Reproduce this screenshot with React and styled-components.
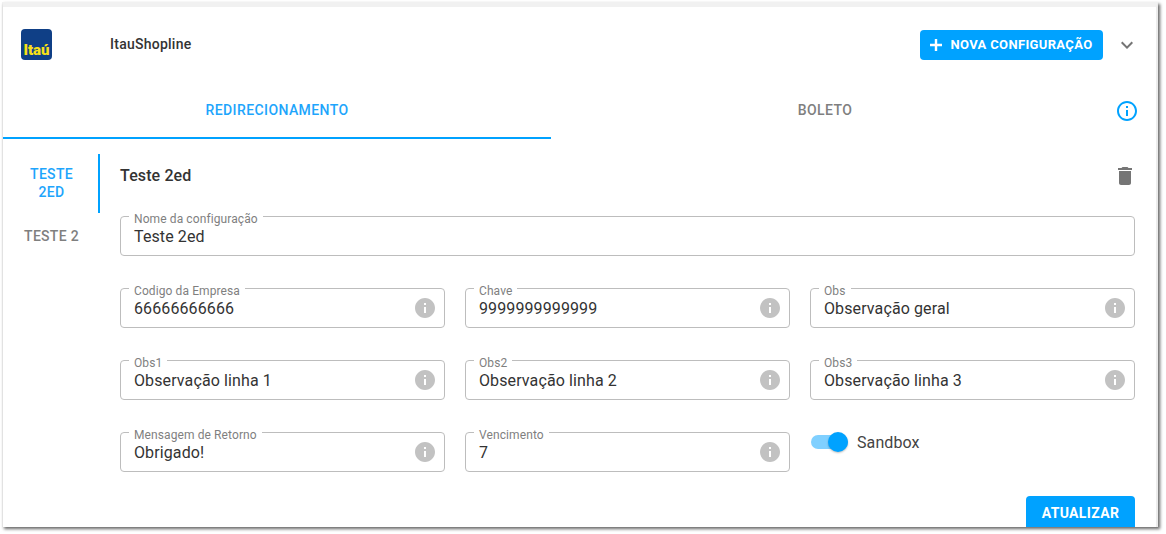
import React from "react";
import styled, { createGlobalStyle } from "styled-components";

const Global = createGlobalStyle`
  html, body { margin: 0; padding: 0; background: #fff; }
  html { height: 100%; overflow: hidden; }
  body { height: 100%; padding-top: 2px; box-sizing: border-box; font-family: Roboto, "Liberation Sans", sans-serif; }
`;

const Shot = styled.div`
  box-sizing: border-box;
  width: 1156px;
  height: 525px;
  margin-left: 2px;
  background: #fff;
  border-top: 5px solid #f1f1f1;
  border-left: 1px solid #e2e2e2;
  border-right: 2px solid #ececec;
  box-shadow: 2px 2px 3px rgba(0, 0, 0, 0.6);
  overflow: hidden;
`;

const Header = styled.header`
  display: flex;
  align-items: center;
  height: 75px;
  padding: 0 17px 0 18px;
`;

const Logo = styled.svg`
  width: 31px;
  height: 31px;
  flex: none;
`;

const LogoText = styled.text`
  font-family: Roboto, sans-serif;
  font-weight: 900;
  font-size: 15px;
  fill: #f7e017;
`;

const Title = styled.div`
  margin-left: 58px;
  padding-bottom: 2px;
  flex: 1;
  font-size: 14px;
  font-weight: 500;
  letter-spacing: 0.25px;
  color: #333;
`;

const PrimaryButton = styled.button`
  display: inline-flex;
  align-items: center;
  justify-content: center;
  gap: ${(p) => (p.$icon ? "7px" : "0")};
  height: ${(p) => p.$h || 30}px;
  width: ${(p) => p.$w}px;
  padding: 0 ${(p) => (p.$icon ? "3px" : "0")} 0 0;
  border: 0;
  border-radius: 4px;
  background: #00a2ff;
  color: #fff;
  font-family: inherit;
  font-size: ${(p) => p.$size || 13}px;
  font-weight: 700;
  letter-spacing: 0.35px;
  text-transform: uppercase;
  white-space: nowrap;
`;

const Chevron = styled.span`
  display: flex;
  margin-left: 12px;
  color: #757575;
`;

const TabRow = styled.div`
  display: flex;
  align-items: stretch;
  height: 57px;
`;

const Tab = styled.div`
  width: 548px;
  display: flex;
  align-items: center;
  justify-content: center;
  box-sizing: border-box;
  height: 57px;
  font-size: 14px;
  font-weight: 500;
  letter-spacing: 0.4px;
  text-transform: uppercase;
  color: ${(p) => (p.$active ? "#1ea5fc" : "#7f7f7f")};
  border-bottom: 2px solid ${(p) => (p.$active ? "#00a2ff" : "transparent")};
`;

const InfoSlot = styled.div`
  flex: 1;
  display: flex;
  align-items: center;
  justify-content: center;
  height: 57px;
  padding-right: 2px;
  color: #00a2ff;
`;

const Body = styled.div`
  display: flex;
  padding-top: 15px;
`;

const Side = styled.nav`
  width: 97px;
  flex: none;
`;

const SideTab = styled.div`
  box-sizing: border-box;
  height: ${(p) => (p.$active ? 59 : 45)}px;
  width: 97px;
  display: flex;
  align-items: center;
  justify-content: center;
  text-align: center;
  padding: 0 ${(p) => (p.$active ? 25 : 13)}px ${(p) => (p.$active ? 2 : 0)}px ${(p) => (p.$active ? 27 : 15)}px;
  font-size: 14px;
  line-height: 18px;
  font-weight: 500;
  letter-spacing: 0.3px;
  text-transform: uppercase;
  color: ${(p) => (p.$active ? "#1ea5fc" : "#7f7f7f")};
  border-right: 2px solid ${(p) => (p.$active ? "#00a2ff" : "transparent")};
`;

const Content = styled.main`
  width: 1015px;
  margin-left: 20px;
`;

const ConfigHead = styled.div`
  display: flex;
  align-items: center;
  justify-content: space-between;
  height: 42px;
  margin-bottom: 20px;
`;

const ConfigTitle = styled.h2`
  margin: 0;
  font-size: 16px;
  font-weight: 500;
  letter-spacing: 0.12px;
  color: #333;
`;

const Trash = styled.svg`
  width: 24px;
  height: 24px;
  margin-right: -2px;
  margin-top: 2px;
  fill: #757575;
`;

const Grid = styled.div`
  display: grid;
  grid-template-columns: repeat(3, 325px);
  column-gap: 20px;
  row-gap: 32px;
`;

const Field = styled.div`
  position: relative;
  box-sizing: border-box;
  grid-column: ${(p) => (p.$wide ? "1 / -1" : "auto")};
  height: 40px;
  display: flex;
  align-items: center;
  justify-content: space-between;
  padding: 0 7px 0 13px;
  border: 1px solid #bdbdbd;
  border-radius: 4px;
`;

const FieldLabel = styled.label`
  position: absolute;
  top: -4px;
  left: 8px;
  padding: 0 5px;
  background: #fff;
  font-size: 12px;
  line-height: 13px;
  letter-spacing: 0.1px;
  color: #7f7f7f;
`;

const FieldValue = styled.span`
  font-size: 16px;
  line-height: 20px;
  padding-top: 2px;
  letter-spacing: 0.11px;
  color: #333;
`;

const Hint = styled.svg`
  width: 24px;
  height: 24px;
  fill: #c2c2c2;
  flex: none;
`;

const SwitchRow = styled.div`
  display: flex;
  align-items: center;
  gap: 9px;
  height: 20px;
`;

const Toggle = styled.div`
  position: relative;
  width: 37px;
  height: 14px;
  margin-left: 1px;
  border-radius: 7px;
  background: #80d0ff;
`;

const Thumb = styled.div`
  position: absolute;
  top: -3px;
  right: 0;
  width: 20px;
  height: 20px;
  border-radius: 50%;
  background: #00a2ff;
  box-shadow: 0 1px 2px rgba(0, 0, 0, 0.25);
`;

const SwitchLabel = styled.span`
  font-size: 16px;
  letter-spacing: 0.1px;
  color: #444;
`;

const Actions = styled.div`
  display: flex;
  justify-content: flex-end;
  margin-top: 24px;
`;

const InfoGlyph = () => (
  <Hint viewBox="0 0 24 24">
    <path d="M12 2C6.48 2 2 6.48 2 12s4.48 10 10 10 10-4.48 10-10S17.52 2 12 2zm1 15h-2v-6h2v6zm0-8h-2V7h2v2z" />
  </Hint>
);

const fields = [
  ["Codigo da Empresa", "66666666666"],
  ["Chave", "9999999999999"],
  ["Obs", "Observação geral"],
  ["Obs1", "Observação linha 1"],
  ["Obs2", "Observação linha 2"],
  ["Obs3", "Observação linha 3"],
  ["Mensagem de Retorno", "Obrigado!"],
  ["Vencimento", "7"],
];

export default function App() {
  return (
    <>
      <Global />
      <Shot>
        <Header>
          <Logo viewBox="0 0 31 31">
            <rect width="31" height="31" rx="4" fill="#0f3f86" />
            <LogoText x="15.5" y="26" textAnchor="middle">Itaú</LogoText>
          </Logo>
          <Title>ItauShopline</Title>
          <PrimaryButton $icon $w={183}>
            <svg width="16" height="16" viewBox="0 0 16 16" fill="none" stroke="#fff" strokeWidth="2.4">
              <path d="M8 2v12M2 8h12" />
            </svg>
            Nova configuração
          </PrimaryButton>
          <Chevron>
            <svg width="24" height="24" viewBox="0 0 24 24" fill="currentColor">
              <path d="M16.59 8.59 12 13.17 7.41 8.59 6 10l6 6 6-6z" />
            </svg>
          </Chevron>
        </Header>
        <TabRow>
          <Tab $active>Redirecionamento</Tab>
          <Tab>Boleto</Tab>
          <InfoSlot>
            <svg width="24" height="24" viewBox="0 0 24 24" fill="currentColor">
              <path d="M11 7h2v2h-2zm0 4h2v6h-2zm1-9C6.48 2 2 6.48 2 12s4.48 10 10 10 10-4.48 10-10S17.52 2 12 2zm0 18c-4.41 0-8-3.59-8-8s3.59-8 8-8 8 3.59 8 8-3.59 8-8 8z" />
            </svg>
          </InfoSlot>
        </TabRow>
        <Body>
          <Side>
            <SideTab $active>Teste 2ed</SideTab>
            <SideTab>Teste 2</SideTab>
          </Side>
          <Content>
            <ConfigHead>
              <ConfigTitle>Teste 2ed</ConfigTitle>
              <Trash viewBox="0 0 24 24">
                <path d="M6 19c0 1.1.9 2 2 2h8c1.1 0 2-.9 2-2V7H6v12zM19 4h-3.5l-1-1h-5l-1 1H5v2h14V4z" />
              </Trash>
            </ConfigHead>
            <Grid>
              <Field $wide>
                <FieldLabel>Nome da configuração</FieldLabel>
                <FieldValue>Teste 2ed</FieldValue>
              </Field>
              {fields.map(([label, value]) => (
                <Field key={label}>
                  <FieldLabel>{label}</FieldLabel>
                  <FieldValue>{value}</FieldValue>
                  <InfoGlyph />
                </Field>
              ))}
              <SwitchRow>
                <Toggle><Thumb /></Toggle>
                <SwitchLabel>Sandbox</SwitchLabel>
              </SwitchRow>
            </Grid>
            <Actions>
              <PrimaryButton $w={109} $h={34} $size={14}>Atualizar</PrimaryButton>
            </Actions>
          </Content>
        </Body>
      </Shot>
    </>
  );
}
